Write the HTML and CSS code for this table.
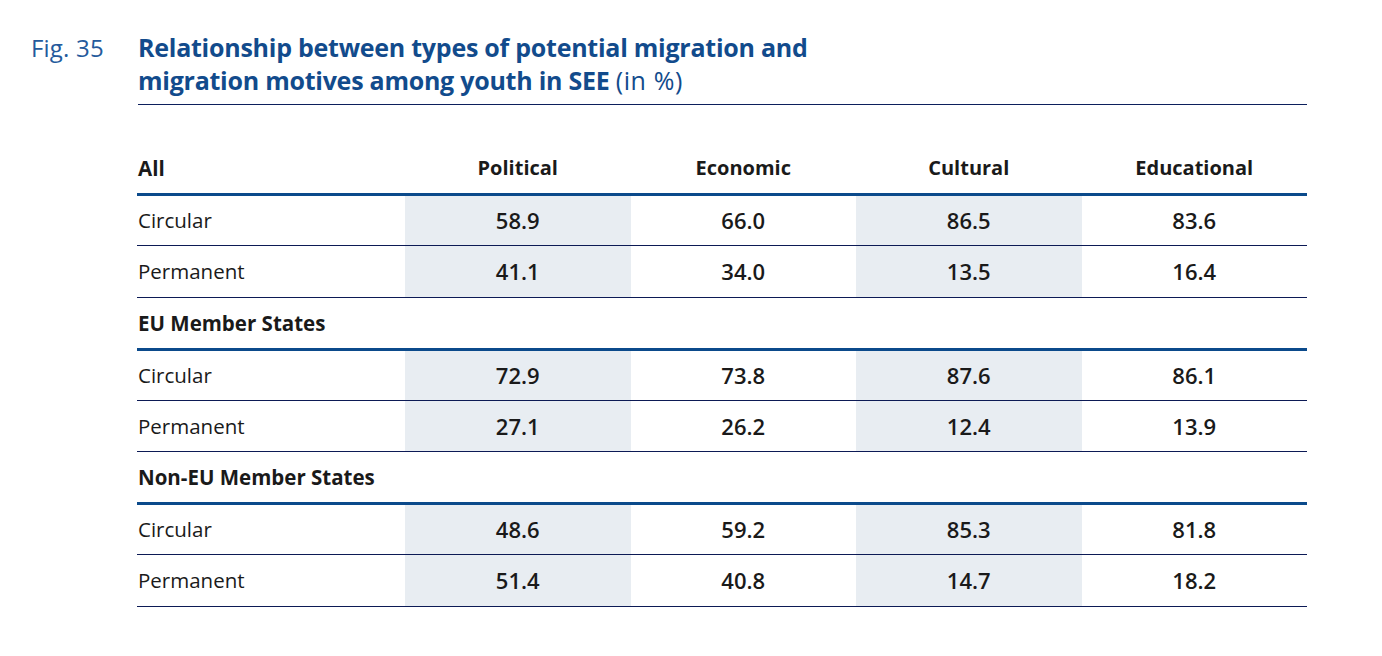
FILE: index.html
```html
<!DOCTYPE html>
<html lang="en">
<head>
<meta charset="utf-8">
<title>Fig. 35</title>
<link rel="stylesheet" href="styles.css">
</head>
<body>
<div class="figure">
  <header class="fig-head">
    <div class="fig-num">Fig. 35</div>
    <h1 class="fig-title">Relationship between types of potential migration and<br>migration motives among youth in SEE <span class="unit">(in %)</span></h1>
  </header>
  <table class="data">
    <thead>
      <tr class="head">
        <th class="label">All</th>
        <th>Political</th>
        <th>Economic</th>
        <th>Cultural</th>
        <th>Educational</th>
      </tr>
    </thead>
    <tbody>
      <tr class="first">
        <td class="label">Circular</td>
        <td class="shade">58.9</td><td>66.0</td><td class="shade">86.5</td><td>83.6</td>
      </tr>
      <tr class="second">
        <td class="label">Permanent</td>
        <td class="shade">41.1</td><td>34.0</td><td class="shade">13.5</td><td>16.4</td>
      </tr>
      <tr class="section">
        <th class="label" colspan="5">EU Member States</th>
      </tr>
      <tr class="first">
        <td class="label">Circular</td>
        <td class="shade">72.9</td><td>73.8</td><td class="shade">87.6</td><td>86.1</td>
      </tr>
      <tr class="second">
        <td class="label">Permanent</td>
        <td class="shade">27.1</td><td>26.2</td><td class="shade">12.4</td><td>13.9</td>
      </tr>
      <tr class="section">
        <th class="label" colspan="5">Non-EU Member States</th>
      </tr>
      <tr class="first">
        <td class="label">Circular</td>
        <td class="shade">48.6</td><td>59.2</td><td class="shade">85.3</td><td>81.8</td>
      </tr>
      <tr class="second">
        <td class="label">Permanent</td>
        <td class="shade">51.4</td><td>40.8</td><td class="shade">14.7</td><td>18.2</td>
      </tr>
    </tbody>
  </table>
</div>
</body>
</html>
```

FILE: styles.css
```css
html, body {
  margin: 0;
  padding: 0;
  background: #ffffff;
}

body {
  font-family: "Open Sans", "Noto Sans", "DejaVu Sans", sans-serif;
  color: #1a1a1a;
}

.figure {
  padding: 31px 0 0 31px;
  width: 1276px;
}

.fig-head {
  display: flex;
  align-items: flex-start;
}

.fig-num {
  width: 107px;
  flex: none;
  font-size: 24px;
  line-height: 33px;
  font-weight: 400;
  color: #245a9c;
  letter-spacing: 0.2px;
}

.fig-title {
  flex: 1;
  margin: 0;
  padding-bottom: 7px;
  border-bottom: 1px solid #0c1f5c;
  font-size: 25px;
  line-height: 33px;
  font-weight: 700;
  color: #124b8c;
  letter-spacing: -0.25px;
}

.unit {
  font-weight: 400;
  letter-spacing: 0.6px;
}

.data {
  margin: 38px 0 0 106px;
  width: 1170px;
  border-collapse: separate;
  border-spacing: 0;
  table-layout: fixed;
  font-size: 20px;
}

.data th,
.data td {
  padding: 0;
  text-align: center;
  white-space: nowrap;
}

.data .label {
  text-align: left;
  width: 267px;
  padding-left: 1px;
  font-size: 20.5px;
}

.head th {
  font-weight: 700;
  line-height: 50px;
  border-bottom: 3px solid #0b4a8b;
}

.head th:not(.label) {
  width: 225.5px;
}

.data td {
  border-bottom: 1px solid #0c1a55;
  font-weight: 600;
  font-size: 22px;
}

.data td.label {
  font-weight: 400;
}

.first td {
  line-height: 49px;
}

.second td {
  line-height: 50.5px;
}

.section th {
  font-weight: 700;
  line-height: 50px;
  border-bottom: 3px solid #0b4a8b;
}

.shade {
  background: #e8edf2;
}
```
